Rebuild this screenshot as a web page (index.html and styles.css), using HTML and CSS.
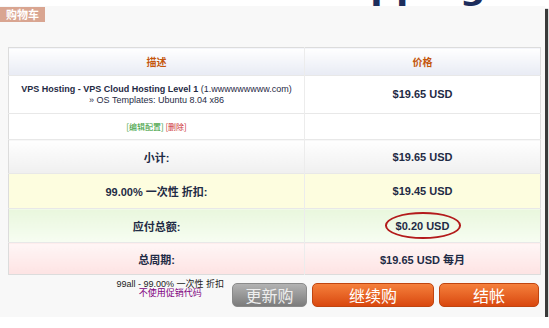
FILE: index.html
```html
<!DOCTYPE html>
<html lang="zh">
<head>
    <meta charset="UTF-8">
    <title>购物车</title>
    <link rel="stylesheet" href="styles.css">
</head>
<body>
    <div class="top"><span class="title">Shopping Cart</span></div>

    <div class="panel">
        <div class="tag">购物车</div>

        <table class="cart">
            <tr class="head">
                <th class="desc">描述</th>
                <th>价格</th>
            </tr>
            <tr class="item">
                <td class="desc"><strong>VPS Hosting - VPS Cloud Hosting Level 1</strong> (1.wwwwwwwww.com)<br>» OS Templates: Ubuntu 8.04 x86</td>
                <td class="price">$19.65 USD</td>
            </tr>
            <tr class="links">
                <td class="desc"><a class="edit" href="#">[编辑配置]</a> <a class="del" href="#">[删除]</a></td>
                <td></td>
            </tr>
            <tr class="sum sub">
                <td class="desc">小计:</td>
                <td>$19.65 USD</td>
            </tr>
            <tr class="sum disc">
                <td class="desc">99.00% 一次性 折扣:</td>
                <td>$19.45 USD</td>
            </tr>
            <tr class="sum total">
                <td class="desc">应付总额:</td>
                <td><span class="circled">$0.20 USD</span></td>
            </tr>
            <tr class="sum recur">
                <td class="desc">总周期:</td>
                <td>$19.65 USD 每月</td>
            </tr>
        </table>

        <div class="footer">
            <div class="promo">
                99all - 99.00% 一次性 折扣<br>
                <a href="#">不使用促销代码</a>
            </div>
            <button class="btn gray">更新购</button>
            <button class="btn orange cont">继续购</button>
            <button class="btn orange check">结帐</button>
        </div>
    </div>
</body>
</html>
```

FILE: styles.css
```css
/* Shopping cart */
body {
    margin: 0;
    background-color: #fff;
    font-family: "Liberation Sans", Arial, "Noto Sans CJK SC", sans-serif;
    font-size: 11px;
    color: #1f2b45;
}

.top {
    height: 6px;
    overflow: hidden;
    padding-left: 294px;
}

.title {
    display: block;
    font: bold 36px/36px "DejaVu Sans", sans-serif;
    color: #1c2d5c;
    margin-top: -31px;
    white-space: nowrap;
}

.panel {
    width: 545px;
    height: 311px;
    background-color: #f8f8f8;
    box-shadow: 3px 3px 1px #3a3a3a;
    padding-top: 1px;
    box-sizing: border-box;
}

.tag {
    width: fit-content;
    background-color: #d9a591;
    color: #fff;
    font-weight: bold;
    font-family: "Noto Sans CJK SC", sans-serif;
    font-size: 11px;
    line-height: 15px;
    padding: 0 6px;
}

.cart {
    margin: 25px 0 0 8px;
    width: 533px;
    table-layout: fixed;
    border-collapse: collapse;
    border: 1px solid #dcdcdc;
    background-color: #fff;
}

.cart th {
    height: 27px;
    padding: 0;
    background: linear-gradient(#ffffff, #e8ebf4);
    color: #c4560c;
    font-family: "Noto Sans CJK SC", sans-serif;
    font-size: 10px;
}

.cart td {
    padding: 0;
    text-align: center;
    border-top: 1px solid #e8e8e8;
}

.cart .desc {
    width: 295px;
    border-right: 1px solid #ececec;
}

.item td {
    height: 37px;
    line-height: 11px;
}

.item .desc {
    font-size: 9px;
    white-space: nowrap;
}

.item strong {
    color: #1f2b45;
}

.price {
    font-weight: bold;
}

.links td {
    height: 25px;
    font-size: 8px;
    font-family: "Noto Sans CJK SC", sans-serif;
}

.links a {
    text-decoration: none;
}

.edit {
    color: #339933;
}

.del {
    color: #cc3333;
}

.sum td {
    height: 33px;
    font-weight: bold;
}

.sub td {
    background: linear-gradient(#ffffff, #efefef);
}

.disc td {
    height: 34px;
    background-color: #fdfddf;
}

.total td {
    background: linear-gradient(#e9f7dd, #f7fdf2);
}

.recur td {
    height: 31px;
    background: linear-gradient(#fff6f6, #fde3e3);
}

.circled {
    position: relative;
}

.circled::after {
    content: "";
    position: absolute;
    top: -8px;
    bottom: -7px;
    left: -11px;
    right: -12px;
    border: 2px solid #b31b1b;
    border-radius: 50%;
}

.footer {
    display: flex;
    justify-content: flex-end;
    align-items: flex-start;
    gap: 5px;
    margin-top: 8px;
    padding-right: 6px;
}

.promo {
    margin-top: -3px;
    margin-right: 3px;
    text-align: center;
    font-size: 9px;
    line-height: 9px;
    color: #222;
}

.promo a {
    color: #800080;
    text-decoration: none;
}

.btn {
    height: 24px;
    padding: 0;
    border: 1px solid;
    border-radius: 5px;
    color: #fff;
    font-family: "Noto Sans CJK SC", sans-serif;
    font-size: 16px;
    line-height: 20px;
}

.gray {
    width: 75px;
    background: linear-gradient(#b3b3b3, #7c7c7c);
    border-color: #8a8a8a;
    color: #eeeeee;
}

.orange {
    background: linear-gradient(#f5803c, #d9480f);
    border-color: #c04510;
}

.cont {
    width: 122px;
}

.check {
    width: 100px;
}
```
